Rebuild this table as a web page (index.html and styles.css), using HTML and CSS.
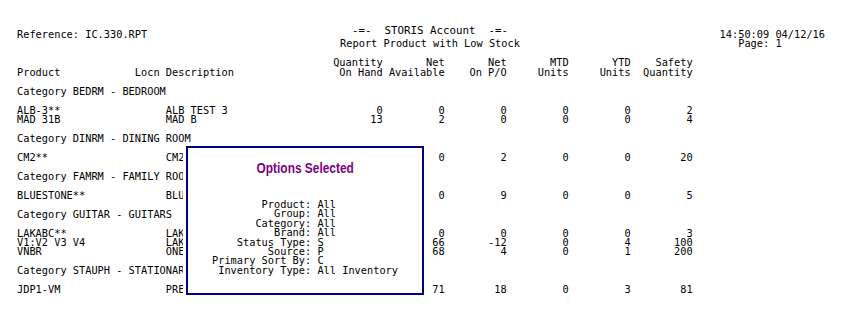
FILE: index.html
```html
<!DOCTYPE html>
<html>
<head>
<meta charset="utf-8">
<title>IC.330.RPT</title>
<link rel="stylesheet" href="styles.css">
</head>
<body>
<div class="report">
  <header class="top">
    <div class="ref">Reference: IC.330.RPT</div>
    <div class="title">
      <div class="title-main">-=-  STORIS Account  -=-</div>
      <div class="title-sub">Report Product with Low Stock</div>
    </div>
    <div class="stamp">
      <div>14:50:09 04/12/16</div>
      <div class="page">Page: 1</div>
    </div>
  </header>

  <div class="row colhead">
    <div class="hprod"><span class="hprod-label">Product</span><span>Locn Description</span></div>
    <div class="num"><span>Quantity</span><span>On Hand</span></div>
    <div class="num"><span>Net</span><span>Available</span></div>
    <div class="num"><span>Net</span><span>On P/O</span></div>
    <div class="num"><span>MTD</span><span>Units</span></div>
    <div class="num"><span>YTD</span><span>Units</span></div>
    <div class="num"><span>Safety</span><span>Quantity</span></div>
  </div>

  <div class="blocks">
    <div class="cat">Category BEDRM - BEDROOM</div>
    <div class="group">
      <div class="row"><div class="prod">ALB-3**</div><div class="desc">ALB TEST 3</div><div class="num">0</div><div class="num">0</div><div class="num">0</div><div class="num">0</div><div class="num">0</div><div class="num">2</div></div>
      <div class="row"><div class="prod">MAD 31B</div><div class="desc">MAD B</div><div class="num">13</div><div class="num">2</div><div class="num">0</div><div class="num">0</div><div class="num">0</div><div class="num">4</div></div>
    </div>

    <div class="cat">Category DINRM - DINING ROOM</div>
    <div class="group">
      <div class="row"><div class="prod">CM2**</div><div class="desc">CM2</div><div class="num"></div><div class="num">0</div><div class="num">2</div><div class="num">0</div><div class="num">0</div><div class="num">20</div></div>
    </div>

    <div class="cat">Category FAMRM - FAMILY ROOM</div>
    <div class="group">
      <div class="row"><div class="prod">BLUESTONE**</div><div class="desc">BLU</div><div class="num"></div><div class="num">0</div><div class="num">9</div><div class="num">0</div><div class="num">0</div><div class="num">5</div></div>
    </div>

    <div class="cat">Category GUITAR - GUITARS</div>
    <div class="group">
      <div class="row"><div class="prod">LAKABC**</div><div class="desc">LAK</div><div class="num"></div><div class="num">0</div><div class="num">0</div><div class="num">0</div><div class="num">0</div><div class="num">3</div></div>
      <div class="row"><div class="prod">V1:V2 V3 V4</div><div class="desc">LAK</div><div class="num"></div><div class="num">66</div><div class="num">-12</div><div class="num">0</div><div class="num">4</div><div class="num">100</div></div>
      <div class="row"><div class="prod">VNBR</div><div class="desc">ONE</div><div class="num"></div><div class="num">68</div><div class="num">4</div><div class="num">0</div><div class="num">1</div><div class="num">200</div></div>
    </div>

    <div class="cat">Category STAUPH - STATIONARY</div>
    <div class="group">
      <div class="row"><div class="prod">JDP1-VM</div><div class="desc">PRE</div><div class="num"></div><div class="num">71</div><div class="num">18</div><div class="num">0</div><div class="num">3</div><div class="num">81</div></div>
    </div>
  </div>

  <aside class="options">
    <div class="options-head"><span class="options-title">Options Selected</span></div>
    <dl class="opt-list">
      <dt>Product:</dt><dd>All</dd>
      <dt>Group:</dt><dd>All</dd>
      <dt>Category:</dt><dd>All</dd>
      <dt>Brand:</dt><dd>All</dd>
      <dt>Status Type:</dt><dd>S</dd>
      <dt>Source:</dt><dd>P</dd>
      <dt>Primary Sort By:</dt><dd>C</dd>
      <dt>Inventory Type:</dt><dd>All Inventory</dd>
    </dl>
  </aside>
</div>
</body>
</html>
```

FILE: styles.css
```css
html, body {
  margin: 0;
  padding: 0;
  background: #ffffff;
}

.report {
  position: relative;
  width: 848px;
  height: 312px;
  box-sizing: border-box;
  padding: 24px 5px 0 17px;
  font-family: "DejaVu Sans Mono", monospace;
  font-size: 10.3px;
  line-height: 9px;
  color: #000000;
  white-space: nowrap;
  overflow: hidden;
}

/* top header */
.top {
  display: grid;
  grid-template-columns: 1fr auto 1fr;
  align-items: end;
}

.ref {
  margin-bottom: 9px;
}

.title {
  text-align: center;
}

.title-main {
  font-size: 10.8px;
  line-height: 13px;
  white-space: pre;
}

.title-sub {
  margin-top: 2px;
}

.stamp {
  justify-self: end;
  margin-right: 18px;
}

.page {
  padding-left: 3ch;
}

/* table rows */
.row {
  display: grid;
  grid-template-columns: 24ch 25ch repeat(6, 10ch);
}

.colhead {
  margin-top: 10px;
  line-height: 9.5px;
}

.colhead .num {
  display: flex;
  flex-direction: column;
  align-items: flex-end;
}

.hprod {
  grid-column: 1 / 3;
  align-self: end;
  display: flex;
}

.hprod-label {
  width: 19ch;
}

.num {
  text-align: right;
}

.blocks {
  margin-top: 10px;
  display: flex;
  flex-direction: column;
  gap: 10px;
}

/* options overlay */
.options {
  position: absolute;
  left: 186px;
  top: 146px;
  width: 238px;
  height: 149px;
  box-sizing: border-box;
  border: 2px solid #000080;
  background: #ffffff;
  box-shadow: 0 0 0 3px #ffffff;
  padding-top: 12px;
}

.options-head {
  text-align: center;
  line-height: 16px;
}

.options-title {
  display: inline-block;
  font-family: "Liberation Sans", sans-serif;
  font-weight: bold;
  font-size: 14px;
  color: #800080;
  transform: scaleX(0.85);
}

.opt-list {
  margin: 23px 0 0 0;
  display: grid;
  grid-template-columns: auto auto;
  column-gap: 1ch;
  justify-content: center;
  line-height: 9.4px;
}

.opt-list dt {
  text-align: right;
}

.opt-list dd {
  margin: 0;
}
```
